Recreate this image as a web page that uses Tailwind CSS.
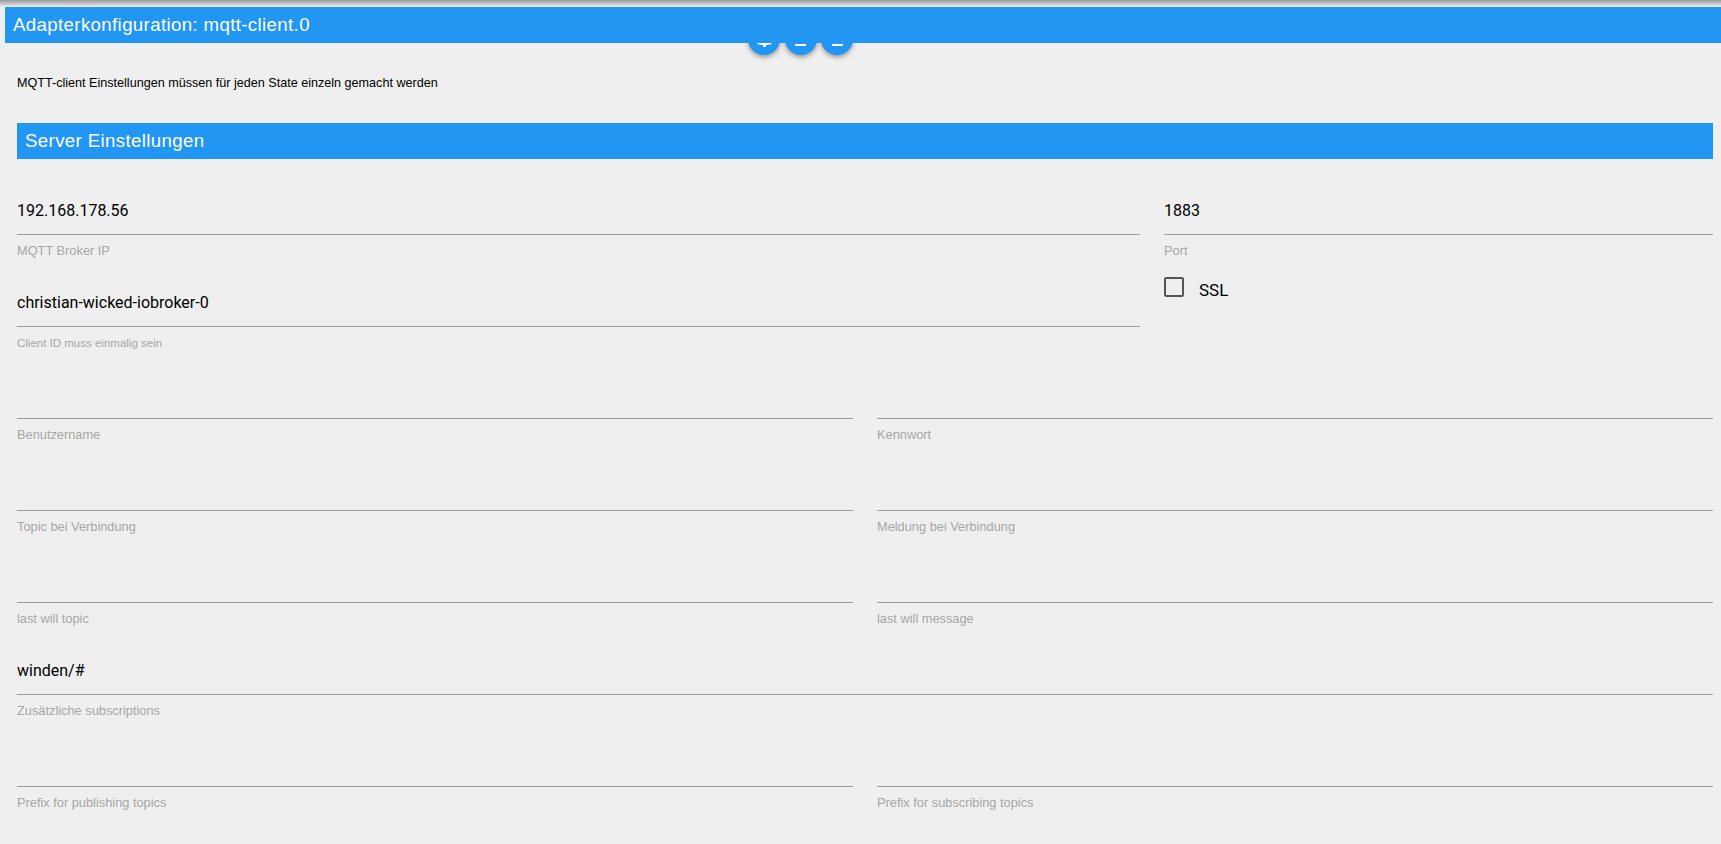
<!DOCTYPE html>
<html lang="en">
<head>
    <meta charset="UTF-8">
    <title>Adapterkonfiguration: mqtt-client.0</title>
    <script src="https://cdn.jsdelivr.net/npm/@tailwindcss/browser@4"></script>
</head>
<body class="h-[844px] overflow-hidden bg-[#efefef] font-['Liberation_Sans',sans-serif]">
    <div class="h-[7px] bg-gradient-to-b from-[#9a9a9a] to-[#efefef]"></div>

    <div class="relative ml-[5px]">
        <!-- buttons sit behind the title bar -->
        <div class="absolute left-[743px] top-[16px] flex gap-[4.5px]">
            <div class="w-[32px] h-[32px] rounded-full bg-[#2196f3] shadow-[0_2px_5px_rgba(0,0,0,0.4)] flex items-end justify-center pb-[8px]">
                <svg width="15" height="6" viewBox="0 0 15 6"><path d="M0 0h15v3l-5 1H9v2H6V4H5L0 3z" fill="#fff"/></svg>
            </div>
            <div class="w-[32px] h-[32px] rounded-full bg-[#2196f3] shadow-[0_2px_5px_rgba(0,0,0,0.4)] flex items-end justify-center pb-[9px]">
                <div class="w-[11px] h-[2px] bg-white"></div>
            </div>
            <div class="w-[32px] h-[32px] rounded-full bg-[#2196f3] shadow-[0_2px_5px_rgba(0,0,0,0.4)] flex items-end justify-center pb-[9px]">
                <div class="w-[11px] h-[2px] bg-white"></div>
            </div>
        </div>
        <div class="relative h-[36px] bg-[#2196f3] text-white text-[18.7px] leading-[36px] tracking-[0.35px] pl-[8px]">Adapterkonfiguration: mqtt-client.0</div>
    </div>

    <div class="pl-[17px] pr-[8px]">
        <p class="mt-[33px] h-[20px] text-[12.6px] leading-[14px] text-black">MQTT-client Einstellungen müssen für jeden State einzeln gemacht werden</p>

        <div class="mt-[27px] h-[36px] bg-[#2196f3] text-white text-[18.7px] leading-[36px] tracking-[0.35px] pl-[8px]">Server Einstellungen</div>

        <div class="flex gap-[24px] mt-[28px]">
            <div class="w-[1123px]">
                <div class="h-[92px]">
                    <div class="h-[48px] border-b border-[#9e9e9e] font-['Roboto',sans-serif] text-[16px] leading-[48px] text-black">192.168.178.56</div>
                    <div class="mt-[9px] text-[12.8px] leading-[14px] text-[#a6a6a6]">MQTT Broker IP</div>
                </div>
                <div class="h-[92px]">
                    <div class="h-[48px] border-b border-[#9e9e9e] font-['Roboto',sans-serif] text-[16px] leading-[48px] text-black">christian-wicked-iobroker-0</div>
                    <div class="mt-[9px] text-[11.5px] leading-[14px] text-[#a6a6a6]">Client ID muss einmalig sein</div>
                </div>
            </div>
            <div class="flex-1">
                <div class="h-[48px] border-b border-[#9e9e9e] font-['Roboto',sans-serif] text-[16px] leading-[48px] text-black">1883</div>
                <div class="mt-[9px] text-[12.8px] leading-[14px] text-[#a6a6a6]">Port</div>
                <div class="mt-[19px] flex items-start gap-[15px]">
                    <div class="w-[20px] h-[20px] rounded-[2px] border-2 border-[#555555]"></div>
                    <span class="font-['Roboto',sans-serif] text-[17px] leading-[26px] text-black">SSL</span>
                </div>
            </div>
        </div>

        <div class="grid grid-cols-2 gap-x-[24px]">
            <div class="h-[92px]">
                <div class="h-[48px] border-b border-[#9e9e9e]"></div>
                <div class="mt-[9px] text-[12.8px] leading-[14px] text-[#a6a6a6]">Benutzername</div>
            </div>
            <div class="h-[92px]">
                <div class="h-[48px] border-b border-[#9e9e9e]"></div>
                <div class="mt-[9px] text-[12.8px] leading-[14px] text-[#a6a6a6]">Kennwort</div>
            </div>
            <div class="h-[92px]">
                <div class="h-[48px] border-b border-[#9e9e9e]"></div>
                <div class="mt-[9px] text-[12.8px] leading-[14px] text-[#a6a6a6]">Topic bei Verbindung</div>
            </div>
            <div class="h-[92px]">
                <div class="h-[48px] border-b border-[#9e9e9e]"></div>
                <div class="mt-[9px] text-[12.8px] leading-[14px] text-[#a6a6a6]">Meldung bei Verbindung</div>
            </div>
            <div class="h-[92px]">
                <div class="h-[48px] border-b border-[#9e9e9e]"></div>
                <div class="mt-[9px] text-[12.8px] leading-[14px] text-[#a6a6a6]">last will topic</div>
            </div>
            <div class="h-[92px]">
                <div class="h-[48px] border-b border-[#9e9e9e]"></div>
                <div class="mt-[9px] text-[12.8px] leading-[14px] text-[#a6a6a6]">last will message</div>
            </div>
            <div class="col-span-2 h-[92px]">
                <div class="h-[48px] border-b border-[#9e9e9e] font-['Roboto',sans-serif] text-[16px] leading-[48px] text-black">winden/#</div>
                <div class="mt-[9px] text-[12.8px] leading-[14px] text-[#a6a6a6]">Zusätzliche subscriptions</div>
            </div>
            <div class="h-[92px]">
                <div class="h-[48px] border-b border-[#9e9e9e]"></div>
                <div class="mt-[9px] text-[12.8px] leading-[14px] text-[#a6a6a6]">Prefix for publishing topics</div>
            </div>
            <div class="h-[92px]">
                <div class="h-[48px] border-b border-[#9e9e9e]"></div>
                <div class="mt-[9px] text-[12.8px] leading-[14px] text-[#a6a6a6]">Prefix for subscribing topics</div>
            </div>
        </div>
    </div>
</body>
</html>
